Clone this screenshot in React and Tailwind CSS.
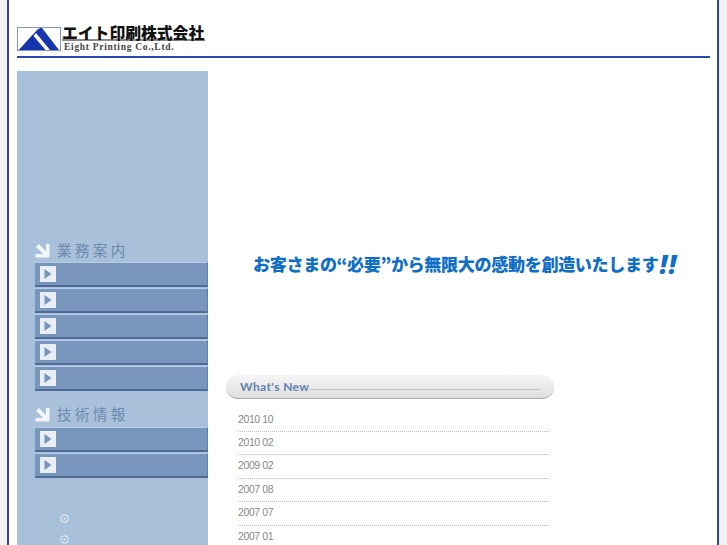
const services = [0, 1, 2, 3, 4];
const tech = [0, 1];
const news = ["2010 10", "2010 02", "2009 02", "2007 08", "2007 07", "2007 01"];

function Arrow() {
  return (
    <svg width="15" height="15" viewBox="0 0 15 15" className="shrink-0 mt-[2px]">
      <path d="M2.5 2.5L12 12" stroke="#f2f5f9" strokeWidth="4" fill="none" />
      <path d="M11 1H14.5V14.5H0.5V11H11Z" fill="#f2f5f9" />
    </svg>
  );
}

function SectionTitle({ children }) {
  return (
    <div className="flex items-start h-[21px] ml-[18px] gap-[7px]">
      <Arrow />
      <span className="text-[14.5px] leading-[17px] tracking-[3.4px] text-[#6c88ad] [font-family:'Noto_Sans_CJK_JP',sans-serif]">
        {children}
      </span>
    </div>
  );
}

function MenuRow() {
  return (
    <div className="h-[25px] mb-px bg-[#7896bb] border-t border-t-[#b5cde8] border-b-2 border-b-[#4d6b93] border-r border-r-[#5f7ea6] flex items-center pl-[5px]">
      <div className="w-[16px] h-[16px] bg-[#e9eef4] flex items-center justify-center">
        <svg width="8" height="10" viewBox="0 0 8 10"><path d="M0.5 0V10L7.5 5Z" fill="#7896bb" /></svg>
      </div>
    </div>
  );
}

function Bullet() {
  return (
    <svg width="9" height="9" viewBox="0 0 9 9">
      <circle cx="4.5" cy="4.5" r="3.8" fill="none" stroke="#eef2f7" strokeWidth="1" />
      <circle cx="4.5" cy="4.5" r="1.1" fill="#eef2f7" />
    </svg>
  );
}

export default function App() {
  return (
    <div className="h-[545px] w-[727px] overflow-hidden bg-[#f1f1f1] pl-[7px] pr-[8px] [font-family:'Liberation_Sans',sans-serif]">
      <div className="h-full bg-white border-x-2 border-x-[#2a46ad] pl-[8px] pr-[7px]">
        <header className="h-[58px] border-b-2 border-b-[#2b4ba8] flex items-end pb-[4px]">
          <div className="flex items-end">
            <svg width="44" height="24" viewBox="0 0 44 24" className="shrink-0 mb-px">
              <rect x="0.5" y="0.5" width="43" height="23" fill="#fff" stroke="#7f95d8" />
              <path d="M2 23L20 3L23 1H25L42 23H33L19 6L16.5 9L28.5 23Z" fill="#1736ad" />
              <path d="M2 23L15.5 8L27 23Z" fill="#1736ad" />
            </svg>
            <div className="ml-[1px] w-[143px]">
              <div className="text-[15.8px] h-[16px] leading-[15px] font-black text-[#111] whitespace-nowrap border-b-2 border-b-[#8a8a8a] [font-family:'Noto_Sans_CJK_JP',sans-serif]">
                エイト印刷株式会社
              </div>
              <div className="text-[9.5px] pl-[2px] mt-[2px] leading-[9px] font-bold tracking-[0.7px] text-[#444] whitespace-nowrap [font-family:'Liberation_Serif',serif]">
                Eight Printing Co.,Ltd.
              </div>
            </div>
          </div>
        </header>

        <div className="flex mt-[13px]">
          <aside className="w-[191px] h-[480px] shrink-0 bg-[#a9c0da] pt-[170px]">
            <SectionTitle>業務案内</SectionTitle>
            <div className="ml-[18px]">
              {services.map((i) => <MenuRow key={i} />)}
            </div>
            <div className="mt-[14px] pb-px">
              <SectionTitle>技術情報</SectionTitle>
            </div>
            <div className="ml-[18px]">
              {tech.map((i) => <MenuRow key={i} />)}
            </div>
            <div className="ml-[43px] mt-[36px] flex flex-col gap-[12px]">
              <Bullet />
              <Bullet />
            </div>
          </aside>

          <main className="flex-1 min-w-0 pl-[18px]">
            <div className="h-[304px] flex items-center pl-[27px] pt-[82px] pb-0">
              <div className="flex items-center whitespace-nowrap text-[17.1px] leading-[24px] font-black tracking-[-0.37px] text-[#0f6ec8] [font-family:'Noto_Sans_CJK_JP',sans-serif]">
                お客さまの“必要”から無限大の感動を創造いたします
                <span className="text-[26px] leading-[24px] italic font-black tracking-[1px] ml-[1px] [font-family:'Noto_Sans',sans-serif]">!!</span>
              </div>
            </div>
            <div className="w-[328px] h-[24px] rounded-[12px] bg-gradient-to-b from-[#f6f6f6] to-[#dedede] border-b border-b-[#a9a9a9] flex items-center pl-[14px] pr-[13px]">
              <span className="text-[12px] font-bold tracking-[0.4px] text-[#5f82ad] whitespace-nowrap [font-family:'Lato',sans-serif]">What's New</span>
              <div className="flex-1 h-px bg-[#c4c4c4] mt-[6px]" />
            </div>
            <ul className="ml-[12px] w-[311px] mt-[9px]">
              {news.map((n, i) => (
                <li key={n} className={`text-[10.5px] tracking-[-0.4px] text-[#888] ${i === 0 ? "h-[24px] leading-[23px]" : "h-[23.4px] leading-[21px]"} ${i < 5 ? "border-b border-dotted border-b-[#bbb]" : ""}`}>
                  {n}
                </li>
              ))}
            </ul>
          </main>
        </div>
      </div>
    </div>
  );
}
